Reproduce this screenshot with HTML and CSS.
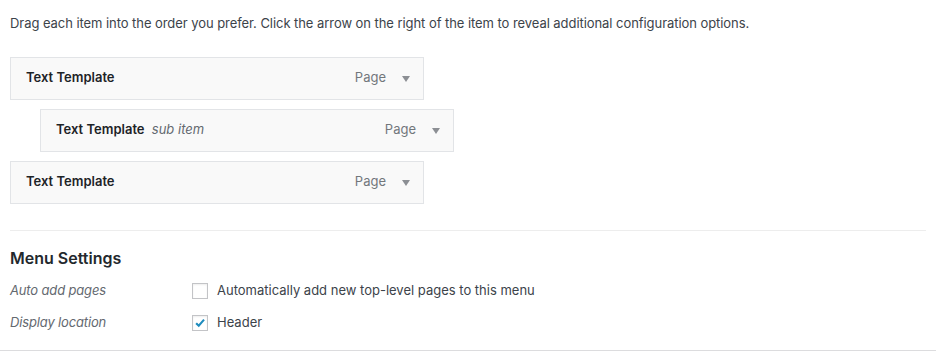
FILE: index.html
```html
<!DOCTYPE html>
<html>
<head>
<meta charset="utf-8">
<link rel="stylesheet" href="styles.css">
</head>
<body>
<div class="wrap">
  <p class="intro">Drag each item into the order you prefer. Click the arrow on the right of the item to reveal additional configuration options.</p>
  <ul class="menu">
    <li class="item">
      <span class="title">Text Template</span>
      <span class="controls"><span class="type">Page</span><span class="arrow"></span></span>
    </li>
    <li class="item depth-1">
      <span class="title">Text Template <em class="sub">sub item</em></span>
      <span class="controls"><span class="type">Page</span><span class="arrow"></span></span>
    </li>
    <li class="item">
      <span class="title">Text Template</span>
      <span class="controls"><span class="type">Page</span><span class="arrow"></span></span>
    </li>
  </ul>
  <div class="settings">
    <h3 class="settings-title">Menu Settings</h3>
    <div class="row">
      <span class="label">Auto add pages</span>
      <label class="check"><span class="box"></span>Automatically add new top-level pages to this menu</label>
    </div>
    <div class="row">
      <span class="label">Display location</span>
      <label class="check"><span class="box checked"><svg viewBox="0 0 16 16" width="16" height="16"><path d="M3.6 8.2 L6.6 11.2 L12.6 4.2" fill="none" stroke="#1e8cbe" stroke-width="2.4" stroke-linecap="butt" stroke-linejoin="miter"/></svg></span>Header</label>
    </div>
  </div>
</div>
<div class="footer"></div>
</body>
</html>
```
FILE: styles.css
```css
html, body {
  margin: 0;
  padding: 0;
  background: #fff;
}
body {
  font-family: Inter, "Noto Sans", "Liberation Sans", sans-serif;
  font-size: 13px;
  color: #3c434a;
  line-height: 1.5;
}
.wrap {
  padding: 0 10px;
}
.intro {
  margin: 14px 0 0;
  font-size: 13px;
  letter-spacing: -0.06px;
}
.menu {
  list-style: none;
  margin: 23px 0 0;
  padding: 0;
  display: flex;
  flex-direction: column;
  gap: 9px;
}
.item {
  box-sizing: border-box;
  width: 414px;
  height: 43px;
  border: 1px solid #e2e4e7;
  background: #f9f9f9;
  display: flex;
  align-items: center;
  justify-content: space-between;
  padding: 0 13px 0 15px;
}
.item.depth-1 {
  margin-left: 30px;
}
.title {
  font-weight: 600;
  color: #1d2327;
}
.sub {
  font-weight: 400;
  font-style: italic;
  color: #646970;
  margin-left: 4px;
}
.controls {
  display: flex;
  align-items: center;
  gap: 16px;
}
.type {
  color: #72777c;
}
.arrow {
  width: 0;
  height: 0;
  border-left: 4px solid transparent;
  border-right: 4px solid transparent;
  border-top: 6px solid #8c8f94;
  margin-top: 1px;
}
.settings {
  margin-top: 26px;
  border-top: 1px solid #ededed;
  padding-top: 15px;
}
.settings-title {
  margin: 0 0 5px;
  font-size: 16px;
  font-weight: 600;
  color: #23282d;
  line-height: 24px;
}
.row {
  display: flex;
  align-items: center;
  height: 32px;
}
.label {
  width: 182px;
  font-style: italic;
  color: #646970;
  letter-spacing: -0.15px;
}
.check {
  display: flex;
  align-items: center;
  gap: 9px;
  color: #3c434a;
}
.box {
  box-sizing: border-box;
  width: 16px;
  height: 16px;
  border: 1px solid #c3c4c7;
  background: #fff;
  display: flex;
  align-items: center;
  justify-content: center;
  box-shadow: inset 0 1px 2px rgba(0,0,0,0.07);
}
.box svg {
  display: block;
}
.footer {
  position: absolute;
  left: 0;
  right: 0;
  top: 350px;
  border-top: 1px solid #dcdcde;
}
```
